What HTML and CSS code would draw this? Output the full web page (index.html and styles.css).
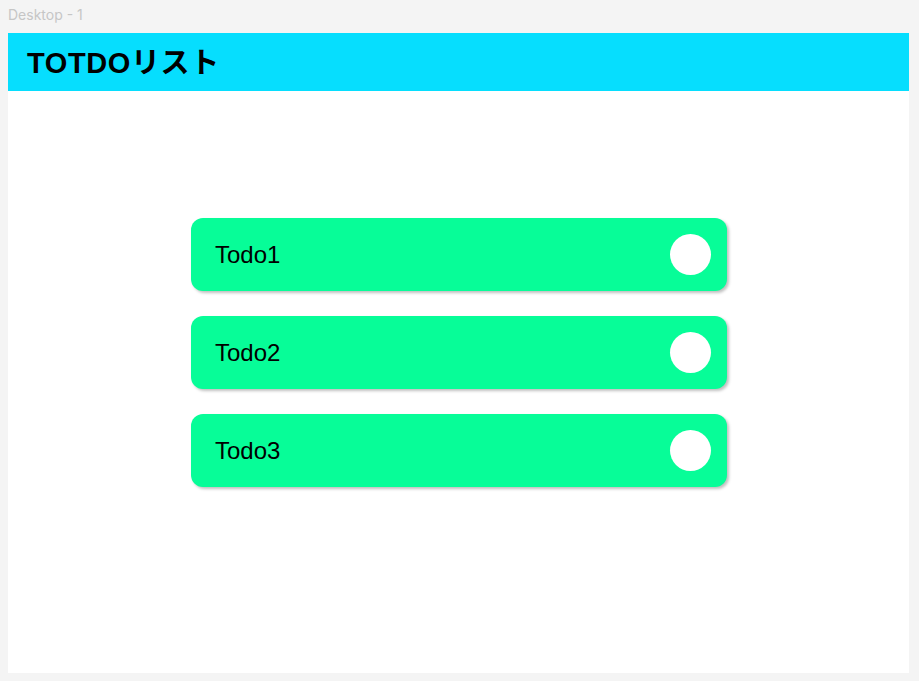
FILE: index.html
```html
<!DOCTYPE html>
<html lang="ja">
<head>
<meta charset="utf-8">
<title>Desktop - 1</title>
<link rel="stylesheet" href="styles.css">
</head>
<body>
<div class="label">Desktop - 1</div>
<div class="frame">
  <header class="header"><h1 class="title">TOTDOリスト</h1></header>
  <main class="list">
    <div class="card"><span class="card-text">Todo1</span><span class="dot"></span></div>
    <div class="card"><span class="card-text">Todo2</span><span class="dot"></span></div>
    <div class="card"><span class="card-text">Todo3</span><span class="dot"></span></div>
  </main>
</div>
</body>
</html>
```
FILE: styles.css
```css
html, body {
  margin: 0;
  padding: 0;
  background: #f4f4f4;
}
body {
  font-family: "Liberation Sans", "Noto Sans CJK JP", sans-serif;
  width: 919px;
  height: 681px;
  overflow: hidden;
}
.label {
  height: 33px;
  box-sizing: border-box;
  padding: 6px 0 0 8px;
  font-family: "Inter", "Liberation Sans", sans-serif;
  font-size: 14px;
  line-height: 18px;
  color: #c6c6c6;
}
.frame {
  margin-left: 8px;
  width: 901px;
  height: 640px;
  background: #ffffff;
}
.header {
  height: 58px;
  background: #06defe;
  display: flex;
  align-items: center;
  padding-left: 19px;
}
.title {
  margin: 0;
  font-family: "Liberation Sans", "Noto Sans CJK JP", sans-serif;
  font-weight: bold;
  font-size: 29px;
  letter-spacing: 0.6px;
  line-height: 1;
  color: #000;
  padding-top: 2px;
}
.list {
  display: flex;
  flex-direction: column;
  align-items: center;
  gap: 25px;
  padding-top: 127px;
  padding-left: 1px;
}
.card {
  width: 536px;
  height: 73px;
  box-sizing: border-box;
  background: #07fd98;
  border-radius: 12px;
  box-shadow: 2px 2px 3px rgba(0, 0, 0, 0.25);
  display: flex;
  align-items: center;
  justify-content: space-between;
  padding: 0 16px 0 24px;
}
.card-text {
  font-size: 24px;
  color: #000;
}
.dot {
  width: 41px;
  height: 41px;
  border-radius: 50%;
  background: #ffffff;
}
```
